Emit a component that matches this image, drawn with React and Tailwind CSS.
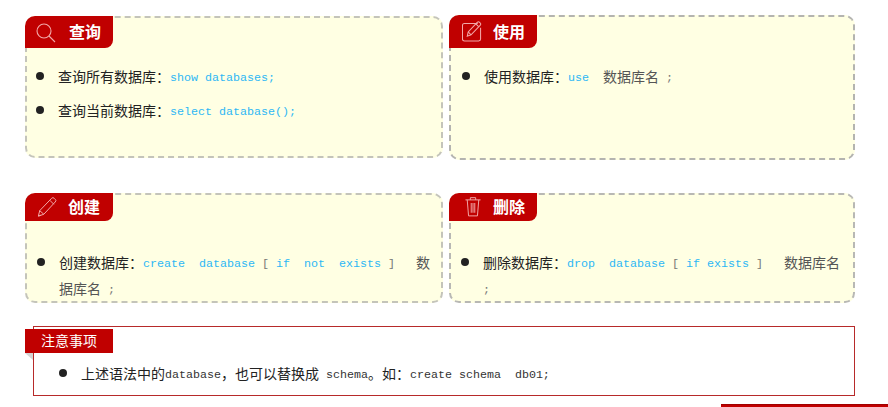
import React from 'react';

const cjk = '[font-family:"Noto_Sans_CJK_SC","Liberation_Sans",sans-serif]';
const mono = 'font-["Liberation_Mono","Noto_Sans_CJK_SC",monospace] text-[11.67px] leading-none align-[1px]';

const SearchIcon = () => (
  <svg width="24" height="24" viewBox="0 0 24 24" fill="none" stroke="#f2a8a8" strokeWidth="1.1">
    <circle cx="11" cy="11" r="7" />
    <path d="M16 16l6 6" />
  </svg>
);

const EditIcon = () => (
  <svg width="20" height="21" viewBox="1.5 2.5 21 21" fill="none" stroke="#f2a8a8" strokeWidth="1.1">
    <path d="M18 4.5H4a2 2 0 0 0-2 2V21a2 2 0 0 0 2 2h15a2 2 0 0 0 2-2V9" />
    <path d="M7 18l1-4.5L17.5 3.5a1.5 1.5 0 0 1 2.5 0l.5.5a1.5 1.5 0 0 1 0 2.5L11 16.5z" />
    <path d="M8 13.5l3 3M16 5l3 3" />
  </svg>
);

const PencilIcon = () => (
  <svg width="20" height="20" viewBox="2 1 21 22" fill="none" stroke="#f2a8a8" strokeWidth="1.1">
    <path d="M3 22l1.5-6L17.5 2.5a2 2 0 0 1 3 0l1 1a2 2 0 0 1 0 3L9 20z" />
    <path d="M4.5 16L9 20M15.5 4.5l4.5 4.5M3 22l3-1" />
  </svg>
);

const TrashIcon = () => (
  <svg width="16" height="20" viewBox="3 1.5 18 22" fill="none" stroke="#f2a8a8" strokeWidth="1.1">
    <path d="M3.5 4.5h17M9 4.5V2h6v2.5" />
    <path d="M5.5 4.5L7 22.5h10l1.5-18" />
    <path d="M10 8v11M12 8v11M14 8v11" />
  </svg>
);

const Code = ({ children }) => <span className={`${mono} text-[#2db7f5]`}>{children}</span>;
const Mark = ({ children }) => <span className={`${mono} text-[#777]`}>{children}</span>;
const Dark = ({ children }) => <span className={`${mono} text-[#333]`}>{children}</span>;
const Muted = ({ children }) => <span className="text-[#555]">{children}</span>;

const Item = ({ className = '', children }) => (
  <li className={`flex text-[14px] leading-[26px] text-[#222] ${className}`}>
    <span className="mt-[9px] h-[8px] w-[8px] shrink-0 rounded-full bg-[#222]" />
    <div className="ml-[14px] min-w-0 flex-1">{children}</div>
  </li>
);

const Card = ({ className, badge, title, icon, children }) => (
  <div className={`rounded-[10px] border-2 border-dashed bg-[#ffffe3] ${className}`}>
    <div className={`-ml-[2px] -mt-[2px] flex w-[88px] items-center rounded-tl-[10px] rounded-br-[8px] bg-[#c00000] font-bold text-white ${badge}`}>
      {icon}
      <span className="pb-[2px] text-[16px] leading-none">{title}</span>
    </div>
    {children}
  </div>
);

export default function App() {
  return (
    <div className={`h-[407px] w-[888px] overflow-hidden bg-white ${cjk}`}>
      <div className="flex items-start gap-[6px] pl-[25px] pt-[15px]">
        <Card
          className="mt-px h-[142px] w-[418px] border-[#c4c4ba]"
          badge="h-[32px] gap-[12px] pl-[8px]"
          title="查询"
          icon={<SearchIcon />}
        >
          <ul className="ml-[9px] mt-[15px]">
            <Item className="h-[34px]">
              查询所有数据库：<Code>show databases;</Code>
            </Item>
            <Item className="h-[34px]">
              查询当前数据库：<Code>select database();</Code>
            </Item>
          </ul>
        </Card>
        <Card
          className="h-[145px] w-[406px] border-[#b4b4b0]"
          badge="h-[33px] gap-[11px] pl-[13px]"
          title="使用"
          icon={<EditIcon />}
        >
          <ul className="ml-[11px] mt-[15px]">
            <Item>
              使用数据库：<Code>use</Code>
              <Mark>{'\u00a0\u00a0'}</Mark>
              <Muted>数据库名</Muted>
              <Mark> ;</Mark>
            </Item>
          </ul>
        </Card>
      </div>

      <div className="mt-[33px] flex items-start gap-[6px] pl-[25px]">
        <Card
          className="h-[110px] w-[418px] border-[#c4c4ba]"
          badge="h-[28px] gap-[11px] pl-[12px]"
          title="创建"
          icon={<PencilIcon />}
        >
          <ul className="ml-[10px] mr-[7px] mt-[28px]">
            <Item>
              创建数据库：<Code>create{'\u00a0\u00a0'}database</Code>
              <Mark>{'\u00a0[\u00a0'}</Mark>
              <Code>if{'\u00a0\u00a0'}not{'\u00a0\u00a0'}exists</Code>
              <Mark>{'\u00a0]\u00a0\u00a0\u00a0'}</Mark>
              <Muted>数据库名</Muted>
              <Mark> ;</Mark>
            </Item>
          </ul>
        </Card>
        <Card
          className="h-[110px] w-[406px] border-[#b8b8b4]"
          badge="h-[28px] gap-[12px] pl-[16px]"
          title="删除"
          icon={<TrashIcon />}
        >
          <ul className="ml-[10px] mr-[11px] mt-[28px]">
            <Item>
              删除数据库：<Code>drop{'\u00a0\u00a0'}database</Code>
              <Mark>{'\u00a0[\u00a0'}</Mark>
              <Code>if{'\u00a0'}exists</Code>
              <Mark>{'\u00a0]\u00a0\u00a0\u00a0'}</Mark>
              <Muted>数据库名</Muted>
              <Mark> ;</Mark>
            </Item>
          </ul>
        </Card>
      </div>

      <div className="relative ml-[33px] mt-[23px] h-[70px] w-[822px] border border-[#b72a2a]">
        <div className="absolute left-[-9px] top-[2px] h-[24px] w-[88px] bg-[#c00000] pb-[2px] pl-[16px] text-[14px] leading-[22px] text-white">
          注意事项
        </div>
        <div className="absolute left-[-9px] top-[26px] h-0 w-0 border-l-[8px] border-t-[7px] border-l-transparent border-t-[#d4d4d4]" />
        <ul className="ml-[25px] mt-[33px]">
          <Item>
            上述语法中的<Dark>database</Dark>，也可以替换成<Dark>{'\u00a0'}schema</Dark>。如：<Dark>create schema{'\u00a0\u00a0'}db01;</Dark>
          </Item>
        </ul>
      </div>

      <div className="ml-[721px] mt-[8px] h-[3px] w-[167px] border-t border-[#a00000] bg-[#c00000]" />
    </div>
  );
}
